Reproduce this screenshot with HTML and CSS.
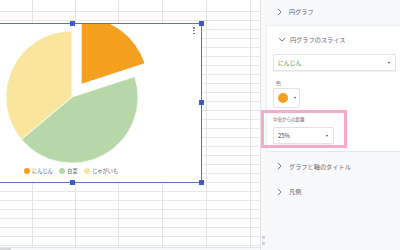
FILE: index.html
```html
<!DOCTYPE html>
<html lang="ja">
<head>
<meta charset="utf-8">
<link rel="stylesheet" href="styles.css">
</head>
<body>
<div class="app">
  <div class="sheet">
    <div class="cols">
      <div class="col c1"></div>
      <div class="col c2"></div>
      <div class="col c3"></div>
      <div class="col c4"></div>
      <div class="col c5"></div>
      <div class="col c6"></div>
      <div class="col c7"></div>
    </div>
    <div class="hscroll"><span class="hthumb"></span></div>
    <div class="chart">
      <svg class="pie" viewBox="-56 24 257 158" width="257" height="158">
        <path d="M81.7,83.7 L81.7,17.7 A66,66 0 0 1 144.5,63.3 Z" fill="#f5a01e"/>
        <path d="M72,97 L134.8,76.6 A66,66 0 0 1 21.4,139.4 Z" fill="#b6d8a9" stroke="#fff" stroke-width="0.8"/>
        <path d="M72,97 L21.4,139.4 A66,66 0 0 1 72,31 Z" fill="#f9e59c" stroke="#fff" stroke-width="0.8"/>
      </svg>
      <div class="menu"><i></i><i></i><i></i></div>
      <div class="legend">
        <span class="item"><span class="dot orange"></span>にんじん</span>
        <span class="item"><span class="dot green"></span>白菜</span>
        <span class="item"><span class="dot yellow"></span>じゃがいも</span>
      </div>
      <span class="h h-tm"></span>
      <span class="h h-tr"></span>
      <span class="h h-mr"></span>
      <span class="h h-br"></span>
      <span class="h h-bm"></span>
    </div>
  </div>
  <div class="vscroll">
    <span class="arrow"></span>
    <span class="arrow"></span>
  </div>
  <div class="panel">
    <div class="sec">
      <svg class="chev" width="5" height="8" viewBox="0 0 5 8"><polyline points="1,0.8 4,4 1,7.2" fill="none" stroke="#6b6f74" stroke-width="0.9"/></svg>
      <span>円グラフ</span>
    </div>
    <div class="card">
      <div class="sec open">
        <svg class="chev down" width="8" height="5" viewBox="0 0 8 5"><polyline points="0.8,1 4,4 7.2,1" fill="none" stroke="#6b6f74" stroke-width="0.9"/></svg>
        <span>円グラフのスライス</span>
      </div>
      <div class="select wide">
        <span class="val green-text">にんじん</span>
        <span class="caret"></span>
      </div>
      <div class="label color-label">色</div>
      <div class="colorbtn">
        <span class="swatch"></span>
        <span class="caret"></span>
      </div>
      <div class="highlight">
        <div class="label small">中央からの距離</div>
        <div class="select narrow">
          <span class="val">25%</span>
          <span class="caret"></span>
        </div>
      </div>
    </div>
    <div class="sec tall">
      <svg class="chev" width="5" height="8" viewBox="0 0 5 8"><polyline points="1,0.8 4,4 1,7.2" fill="none" stroke="#6b6f74" stroke-width="0.9"/></svg>
      <span>グラフと軸のタイトル</span>
    </div>
    <div class="sec">
      <svg class="chev" width="5" height="8" viewBox="0 0 5 8"><polyline points="1,0.8 4,4 1,7.2" fill="none" stroke="#6b6f74" stroke-width="0.9"/></svg>
      <span>凡例</span>
    </div>
  </div>
</div>
</body>
</html>
```

FILE: styles.css
```css
* { box-sizing: border-box; }
html, body { margin: 0; padding: 0; }
body {
  width: 400px;
  height: 250px;
  overflow: hidden;
  background: #fff;
  font-family: "Noto Sans CJK JP", "Roboto", sans-serif;
  color: #5f6368;
}
.app {
  display: flex;
  width: 400px;
  height: 250px;
}
.sheet {
  position: relative;
  width: 261px;
  height: 250px;
  flex: none;
  overflow: hidden;
  background-color: #fff;
  background-image: repeating-linear-gradient(to bottom, transparent 0 8px, #e6e7e8 8px 9px);
  background-position: 0 3px;
  border-right: 1px solid #e3e4e6;
}
.cols {
  display: flex;
  height: 247px;
}
.col {
  height: 100%;
  border-right: 1px solid #e2e3e5;
}
.c1 { width: 33px; }
.c2 { width: 43px; }
.c3 { width: 43px; }
.c4 { width: 44px; }
.c5 { width: 44px; }
.c6 { width: 44px; }
.c7 { width: 9px; border-right: none; }
.hscroll {
  height: 3px;
  border-top: 1px solid #e3e4e6;
  background: #f8f9fa;
}
.hthumb {
  display: block;
  width: 11px;
  height: 2px;
  background: #d5d7da;
}
.chart {
  position: absolute;
  left: -57px;
  top: 23px;
  width: 259px;
  height: 160px;
  background: #fff;
  border: 1px solid #5b72c9;
}
.pie {
  position: absolute;
  left: 0;
  top: 0;
  display: block;
}
.menu {
  position: absolute;
  right: 6px;
  top: 3px;
  display: flex;
  flex-direction: column;
  gap: 1.3px;
}
.menu i {
  display: block;
  width: 1.6px;
  height: 1.6px;
  border-radius: 50%;
  background: #6d6d6d;
}
.legend {
  position: absolute;
  left: 80px;
  top: 143px;
  display: flex;
  align-items: center;
  gap: 6.5px;
  font-size: 5.2px;
  line-height: 8px;
  color: #5b5b5b;
}
.item {
  display: flex;
  align-items: center;
  gap: 2px;
}
.dot {
  width: 6px;
  height: 6px;
  border-radius: 50%;
}
.orange { background: #f5a01e; }
.green { background: #b6d8a9; }
.yellow { background: #f9e59c; }
.h {
  position: absolute;
  width: 5px;
  height: 5px;
  background: #3d5bc8;
}
.h-tm { top: -3px; left: 126px; }
.h-bm { bottom: -3px; left: 126px; }
.h-tr { top: -3px; right: -3px; }
.h-br { bottom: -3px; right: -3px; }
.h-mr { top: 76px; right: -3px; }
.vscroll {
  width: 5px;
  flex: none;
  background: #f8f9fa;
  display: flex;
  flex-direction: column;
  justify-content: flex-end;
  align-items: center;
  gap: 3px;
  padding-bottom: 5px;
}
.arrow {
  width: 3px;
  height: 3px;
  background: #d0d2d5;
}
.panel {
  flex: 1;
  background: #f8f9fa;
  height: 250px;
}
.sec {
  display: flex;
  align-items: center;
  height: 23px;
  padding-left: 11px;
  font-size: 6.2px;
  color: #5f6368;
  gap: 7px;
}
.sec.tall { height: 28px; }
.chev { display: block; flex: none; }
.chev.down { margin-right: -3px; }
.card {
  margin-top: 2px;
  background: #fff;
  border-top: 1px solid #eceef0;
  border-left: 1px solid #eceef0;
  border-bottom: 1px solid #e4e6e8;
  padding: 0 5px 4px 6px;
  height: 127px;
}
.sec.open {
  height: 26px;
  padding-left: 5px;
}
.select {
  display: flex;
  align-items: center;
  justify-content: space-between;
  height: 17px;
  border: 1px solid #e0e2e5;
  border-radius: 2px;
  padding: 0 5px 0 4px;
  background: #fff;
  box-shadow: 0 0.5px 1px rgba(0,0,0,0.06);
}
.select.wide { margin-top: 2px; width: 123px; }
.select.narrow { margin-top: 5px; width: 61px; }
.val {
  font-size: 5.8px;
  color: #3c4043;
}
.green-text { color: #3d9a55; }
.caret {
  width: 0;
  height: 0;
  border-left: 1.6px solid transparent;
  border-right: 1.6px solid transparent;
  border-top: 2px solid #444;
}
.label {
  font-size: 5px;
  line-height: 8px;
  color: #5f6368;
}
.color-label { margin-top: 8px; padding-left: 3px; }
.colorbtn {
  margin-top: 1px;
  width: 27px;
  height: 20px;
  border: 1px solid #e0e2e5;
  border-radius: 2px;
  display: flex;
  align-items: center;
  padding-left: 4px;
  gap: 6px;
}
.swatch {
  width: 10px;
  height: 10px;
  border-radius: 50%;
  background: #f5a01e;
}
.highlight {
  margin-top: 2px;
  margin-left: -12px;
  width: 86px;
  height: 38px;
  border: 3px solid #f3abc9;
  padding: 3px 0 0 9px;
}
.label.small {
  font-size: 4.5px;
  line-height: 6px;
}
```
